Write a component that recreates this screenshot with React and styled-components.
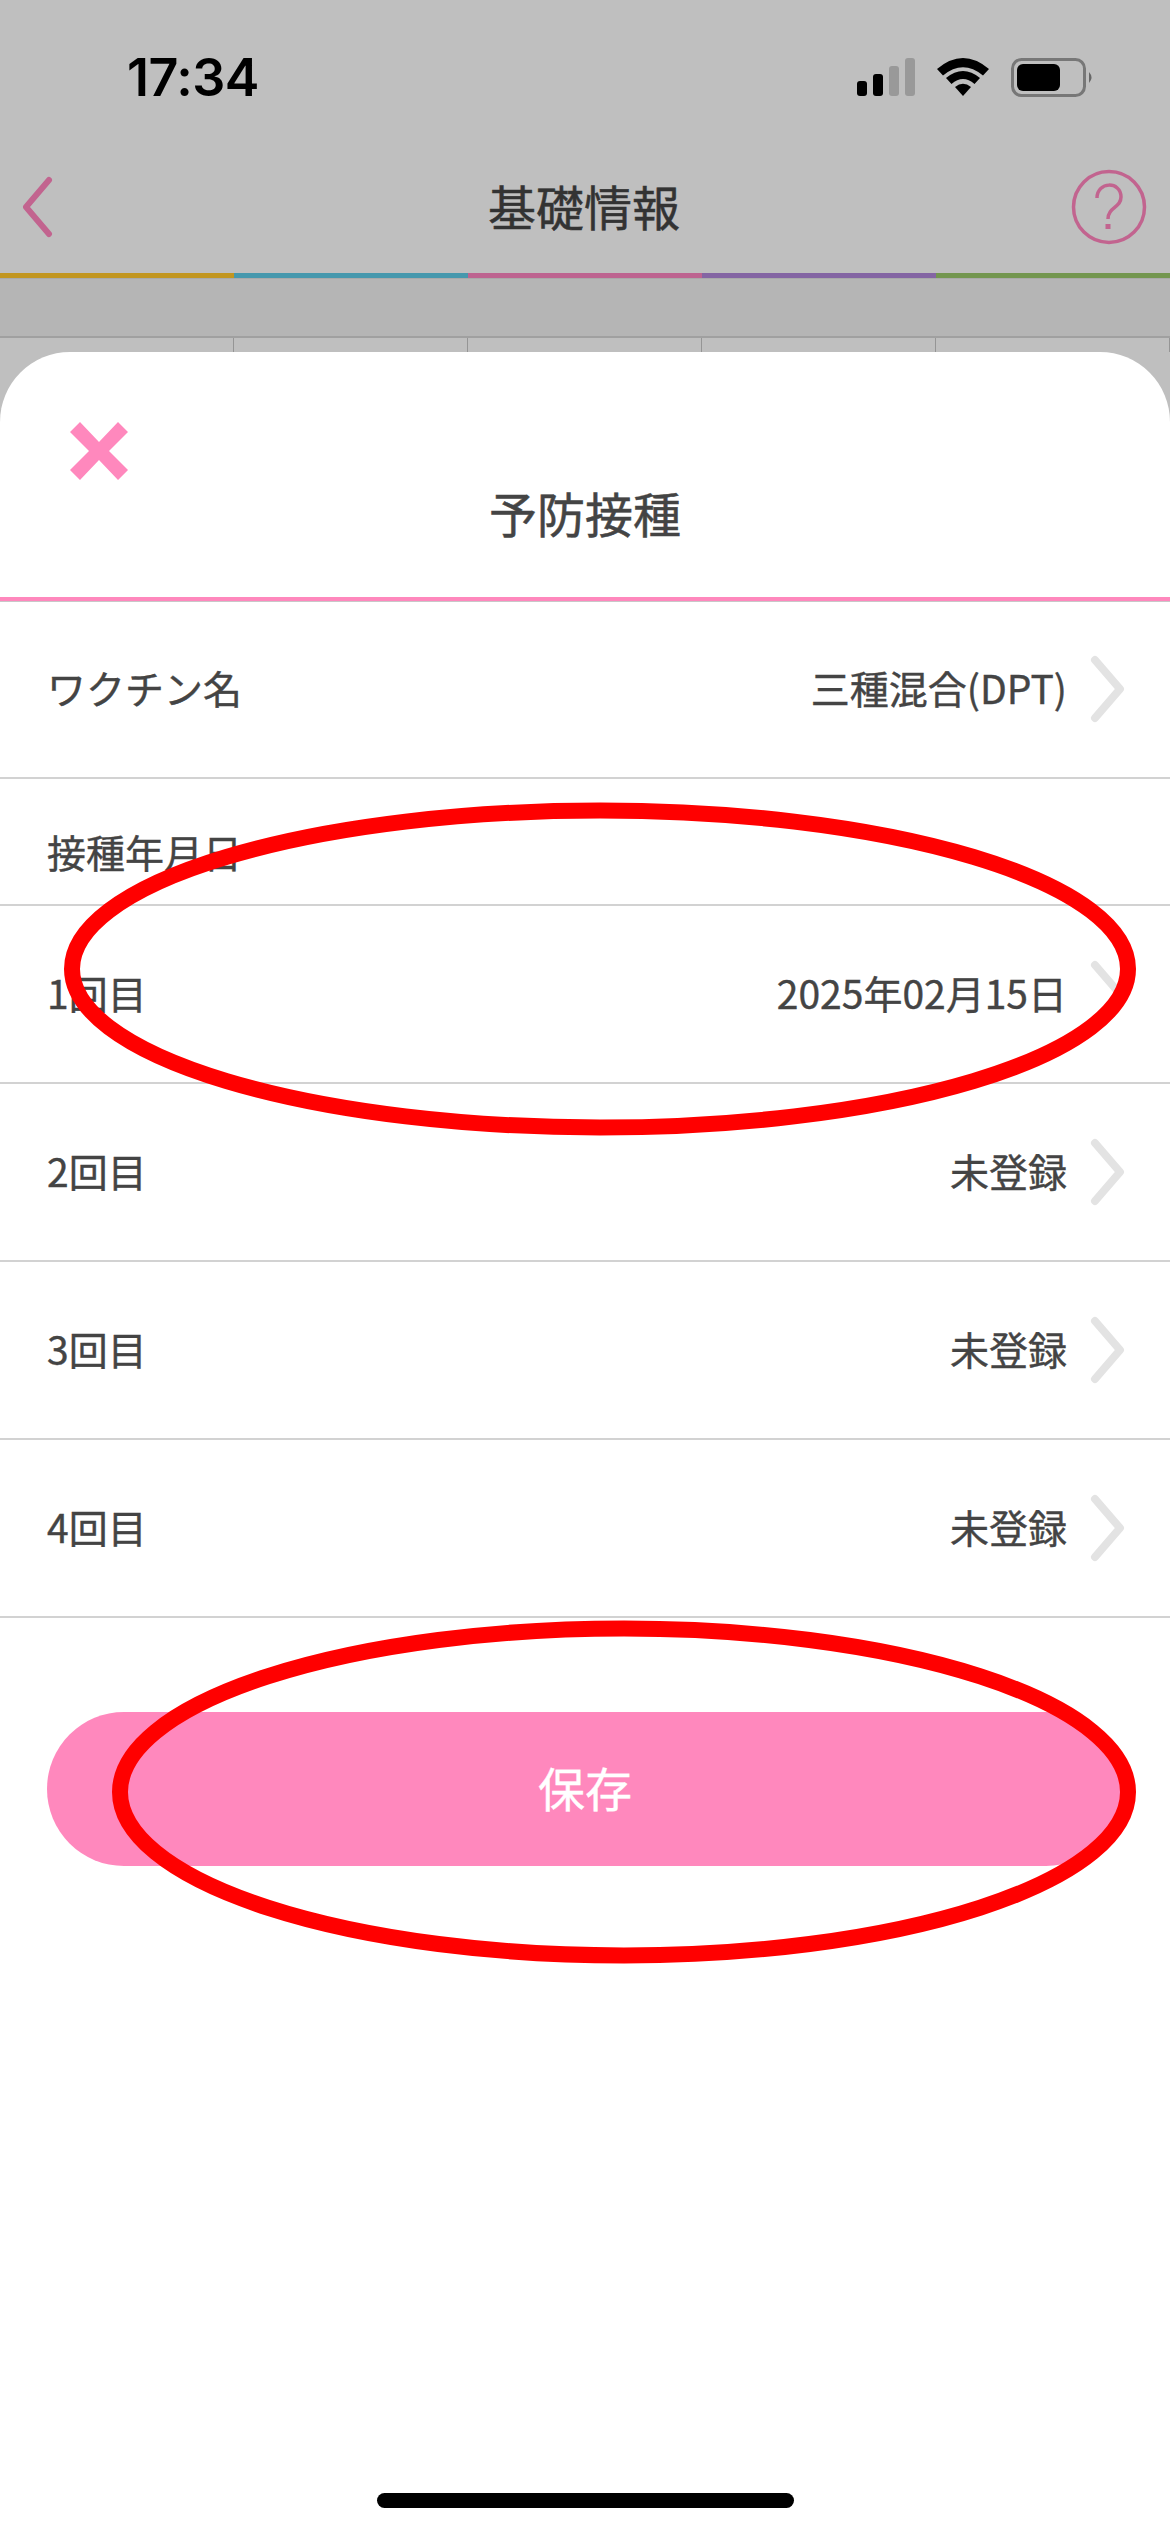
import React from "react";
import styled, { createGlobalStyle } from "styled-components";

const GlobalStyle = createGlobalStyle`
  html, body {
    margin: 0;
    padding: 0;
    background: #bfbfbf;
  }
  * {
    box-sizing: border-box;
  }
`;

const fontStack = `"Noto Sans CJK JP", "Noto Sans", sans-serif`;

const Page = styled.div`
  position: relative;
  width: 1170px;
  height: 2532px;
  display: flex;
  flex-direction: column;
  overflow: hidden;
  background: #bfbfbf;
  font-family: ${fontStack};
`;

const StatusBar = styled.div`
  height: 100px;
  padding: 53px 76px 0 127px;
  display: flex;
  justify-content: space-between;
  align-items: flex-start;
`;

const Clock = styled.div`
  font-family: Inter, sans-serif;
  font-size: 52px;
  font-weight: 600;
  line-height: 50px;
  letter-spacing: -0.5px;
  color: #000;
`;

const StatusIcons = styled.div`
  display: flex;
  align-items: flex-start;
  gap: 22px;
  margin-top: 5px;
`;

const NavBar = styled.div`
  height: 173px;
  display: grid;
  grid-template-columns: 1fr auto 1fr;
  align-items: center;
  padding: 40px 23px 0 21px;
`;

const NavSide = styled.div`
  display: flex;
  justify-content: ${props => (props.end ? "flex-end" : "flex-start")};
`;

const NavTitle = styled.h1`
  margin: 0;
  padding-bottom: 4px;
  font-size: 48px;
  font-weight: 400;
  line-height: 60px;
  color: #333;
  -webkit-text-stroke: 0.5px #333;
`;

const Rainbow = styled.div`
  display: grid;
  grid-template-columns: repeat(5, 1fr);
  height: 5px;
`;

const RainbowPart = styled.div`
  background: ${props => props.color};
`;

const Band = styled.div`
  height: 60px;
  background: #b5b5b5;
  border-top: 1px solid #a9a9a9;
  border-bottom: 2px solid #a0a0a0;
`;

const Cells = styled.div`
  display: grid;
  grid-template-columns: repeat(5, 1fr);
  height: 14px;
`;

const Cell = styled.div`
  border-right: 1px solid #959595;
`;

const Sheet = styled.div`
  flex: 1;
  display: flex;
  flex-direction: column;
  background: #fff;
  border-radius: 70px 70px 0 0;
`;

const SheetHeader = styled.div`
  height: 249px;
  padding: 70px 0 0 70px;
  border-bottom: 4px solid #ff88bd;
  box-shadow: 0 1px 0 #c8c8c8;
`;

const SheetTitle = styled.h2`
  margin: 2px 70px 0 0;
  font-size: 48px;
  font-weight: 400;
  line-height: 60px;
  text-align: center;
  color: #444;
  -webkit-text-stroke: 0.5px #444;
`;

const Row = styled.div`
  height: 178px;
  display: flex;
  align-items: center;
  justify-content: space-between;
  padding: 0 45px 0 47px;
  border-bottom: 2px solid #d2d2d2;
  font-size: 39px;
  font-weight: 400;
  color: #444;
  -webkit-text-stroke: 0.4px #444;
`;

const RowText = styled.span`
  padding-bottom: 5px;
`;

const SectionLabel = styled.div`
  height: 127px;
  padding: 44px 47px 0;
  border-bottom: 2px solid #d2d2d2;
  font-size: 39px;
  font-weight: 400;
  line-height: 56px;
  color: #444;
  -webkit-text-stroke: 0.4px #444;
`;

const RowValue = styled.div`
  display: flex;
  align-items: center;
  gap: 23px;
`;

const SaveButton = styled.button`
  display: block;
  width: 1076px;
  height: 154px;
  margin: 94px 0 0 47px;
  padding: 0 0 6px;
  border: 0;
  border-radius: 77px;
  background: #ff88bd;
  color: #fff;
  font-family: ${fontStack};
  font-size: 47px;
  font-weight: 400;
  -webkit-text-stroke: 0.4px #fff;
`;

const HomeIndicator = styled.div`
  width: 417px;
  height: 15px;
  margin: auto auto 24px;
  border-radius: 8px;
  background: #000;
`;

// red hand-drawn style marks lying over the screenshot
const Marks = styled.svg`
  position: absolute;
  top: 0;
  left: 0;
  pointer-events: none;
`;

const SignalIcon = () => (
  <svg width="58" height="38" viewBox="0 0 58 38">
    <rect x="0" y="23" width="10" height="15" rx="3" fill="#000" />
    <rect x="16" y="16" width="10" height="22" rx="3" fill="#000" />
    <rect x="32" y="8" width="10" height="30" rx="3" fill="#999" />
    <rect x="48" y="0" width="10" height="38" rx="3" fill="#999" />
  </svg>
);

const WifiIcon = () => (
  <svg width="52" height="38" viewBox="0 0 52 38">
    <path d="M0 11 Q26 -11 52 11 L46 17.5 Q26 1 6 17.5 Z" fill="#000" />
    <path d="M9 20 Q26 6 43 20 L37.5 26 Q26 16 14.5 26 Z" fill="#000" />
    <path d="M18 29 Q26 22.5 34 29 L26 38 Z" fill="#000" />
  </svg>
);

const BatteryIcon = () => (
  <svg width="83" height="40" viewBox="0 0 83 40">
    <rect x="1.5" y="1.5" width="72" height="36" rx="9" fill="none" stroke="#777" strokeWidth="3" />
    <rect x="6" y="6" width="43" height="27" rx="6" fill="#000" />
    <path d="M78 14 Q83 19.500 78 25 Z" fill="#666" />
  </svg>
);

const BackIcon = () => (
  <svg width="32" height="62" viewBox="0 0 32 62">
    <path d="M28 4 L5 31 L28 58" fill="none" stroke="#c2648f" strokeWidth="6" strokeLinecap="round" strokeLinejoin="round" />
  </svg>
);

const HelpIcon = () => (
  <svg width="76" height="76" viewBox="0 0 76 76">
    <circle cx="38" cy="38" r="35.500" fill="none" stroke="#c2648f" strokeWidth="3.500" />
    <path d="M26 29 C26 12 50 12 50 28 C50 39 37 38 37 50" fill="none" stroke="#c2648f" strokeWidth="3.500" />
    <rect x="34.500" y="55" width="5" height="5" fill="#c2648f" />
  </svg>
);

const CloseIcon = () => (
  <svg width="58" height="58" viewBox="0 0 58 58" style={{ display: "block" }}>
    <path d="M0 10 L10 0 L29 20 L48 0 L58 10 L39 29 L58 48 L48 58 L29 38 L10 58 L0 48 L19 29 Z" fill="#ff88bd" />
  </svg>
);

const Chevron = () => (
  <svg width="35" height="68" viewBox="0 0 35 68">
    <path d="M5 5 L30 34 L5 63" fill="none" stroke="#e3e3e3" strokeWidth="8" strokeLinecap="round" strokeLinejoin="round" />
  </svg>
);

const rainbow = ["#c29620", "#4698ad", "#bd6490", "#8465a3", "#73964f"];

const doses = [
  { label: "1回目", value: "2025年02月15日" },
  { label: "2回目", value: "未登録" },
  { label: "3回目", value: "未登録" },
  { label: "4回目", value: "未登録" }
];

export default function App() {
  return (
    <Page>
      <GlobalStyle />
      <StatusBar>
        <Clock>17:34</Clock>
        <StatusIcons>
          <SignalIcon />
          <WifiIcon />
          <BatteryIcon />
        </StatusIcons>
      </StatusBar>
      <NavBar>
        <NavSide>
          <BackIcon />
        </NavSide>
        <NavTitle>基礎情報</NavTitle>
        <NavSide end>
          <HelpIcon />
        </NavSide>
      </NavBar>
      <Rainbow>
        {rainbow.map(color => (
          <RainbowPart key={color} color={color} />
        ))}
      </Rainbow>
      <Band />
      <Cells>
        {rainbow.map(color => (
          <Cell key={color} />
        ))}
      </Cells>
      <Sheet>
        <SheetHeader>
          <CloseIcon />
          <SheetTitle>予防接種</SheetTitle>
        </SheetHeader>
        <Row>
          <RowText>ワクチン名</RowText>
          <RowValue>
            <RowText>三種混合(DPT)</RowText>
            <Chevron />
          </RowValue>
        </Row>
        <SectionLabel>接種年月日</SectionLabel>
        {doses.map(dose => (
          <Row key={dose.label}>
            <RowText>{dose.label}</RowText>
            <RowValue>
              <RowText>{dose.value}</RowText>
              <Chevron />
            </RowValue>
          </Row>
        ))}
        <SaveButton>保存</SaveButton>
        <HomeIndicator />
      </Sheet>
      <Marks width="1170" height="2532" viewBox="0 0 1170 2532">
        <ellipse cx="600" cy="969" rx="528" ry="158.500" fill="none" stroke="#f00" strokeWidth="16" />
        <ellipse cx="624" cy="1792" rx="504" ry="163.500" fill="none" stroke="#f00" strokeWidth="16" />
      </Marks>
    </Page>
  );
}
